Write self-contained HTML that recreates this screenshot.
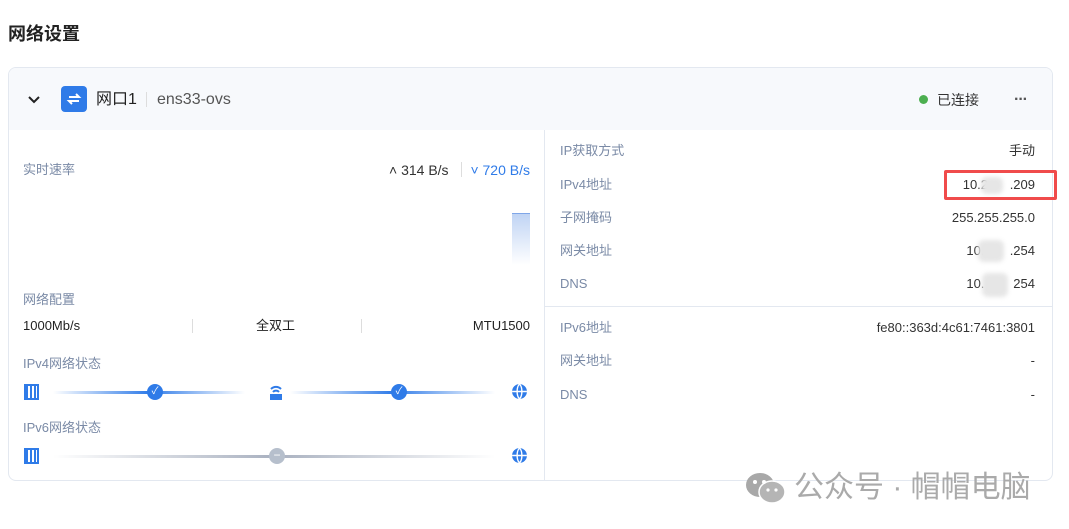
<!DOCTYPE html>
<html><head><meta charset="utf-8"><style>
*{margin:0;padding:0;box-sizing:border-box}
body{width:1069px;height:529px;background:#fff;font-family:"Liberation Sans","Noto Sans CJK SC",sans-serif;position:relative;overflow:hidden;color:#222}
.a{position:absolute;white-space:nowrap;line-height:18px}
.lab{color:#7a8aa6;font-size:13px}
.val{color:#333;font-size:13px;text-align:right}
.blur{position:absolute;background:#e6e6e6;border-radius:6px;filter:blur(2px)}
</style></head><body>
<div class="a" style="left:8px;top:24px;font-size:18px;line-height:20px;font-weight:bold;color:#222">网络设置</div>
<div class="a" style="left:8px;top:67px;width:1045px;height:414px;border:1px solid #e3e8f0;border-radius:8px;overflow:hidden">
 <div class="a" style="left:0;top:0;width:1045px;height:62px;background:#f7f9fc"></div>
 <div class="a" style="left:535px;top:62px;width:1px;height:352px;background:#e3e8f0"></div>
 <div class="a" style="left:536px;top:238px;width:510px;height:1px;background:#e3e8f0"></div>
</div>
<svg class="a" style="left:27px;top:95px" width="14" height="10" viewBox="0 0 14 10"><path d="M2 2l5 5 5-5" stroke="#222" stroke-width="2" fill="none"/></svg>
<div class="a" style="left:61px;top:86px;width:26px;height:26px;background:#2f7be8;border-radius:4px"></div>
<svg class="a" style="left:64px;top:89px" width="20" height="20" viewBox="0 0 20 20"><path d="M5 8h10l-3-3M15 12H5l3 3" stroke="#fff" stroke-width="2" fill="none"/></svg>
<div class="a" style="left:96px;top:90px;font-size:16px;line-height:20px;color:#222">网口1</div>
<div class="a" style="left:146px;top:92px;width:1px;height:15px;background:#ddd"></div>
<div class="a" style="left:157px;top:90px;font-size:16px;line-height:20px;color:#555">ens33-ovs</div>
<div class="a" style="left:919px;top:95px;width:9px;height:9px;border-radius:50%;background:#4caf50"></div>
<div class="a" style="left:937px;top:91px;font-size:14px;color:#333">已连接</div>
<div class="a" style="left:1014px;top:91px;font-size:16px;color:#555;letter-spacing:-1px;font-weight:bold">···</div>

<div class="a lab" style="left:23px;top:161px">实时速率</div>
<div class="a" style="left:389px;top:161px;font-size:14px;color:#333">˄ 314 B/s</div>
<div class="a" style="left:461px;top:162px;width:1px;height:15px;background:#ddd"></div>
<div class="a" style="right:539px;top:161px;font-size:14px;color:#2f7be8">˅ 720 B/s</div>
<div class="a" style="left:512px;top:213px;width:18px;height:52px;background:linear-gradient(#c0d4f4,#fff);border-top:1px solid #7fa6e8"></div>
<div class="a lab" style="left:23px;top:291px">网络配置</div>
<div class="a" style="left:23px;top:317px;font-size:13px">1000Mb/s</div>
<div class="a" style="left:192px;top:319px;width:1px;height:14px;background:#ddd"></div>
<div class="a" style="left:256px;top:317px;font-size:13px">全双工</div>
<div class="a" style="left:361px;top:319px;width:1px;height:14px;background:#ddd"></div>
<div class="a" style="right:539px;top:317px;font-size:13px">MTU1500</div>
<div class="a lab" style="left:23px;top:355px">IPv4网络状态</div>
<div class="a lab" style="left:23px;top:419px">IPv6网络状态</div>
<div class="a" style="left:24px;top:384px;width:15px;height:16px;border:2px solid #2f7be8;background:repeating-linear-gradient(90deg,#2f7be8 0 2px,#fff 2px 4px)"></div>
<div class="a" style="left:53px;top:391px;width:192px;height:3px;background:linear-gradient(90deg,#fff,#2f7be8 50%,#fff)"></div>
<div class="a" style="left:147px;top:384px;width:16px;height:16px;border-radius:50%;background:#2f7be8;color:#fff;font-size:10px;text-align:center;line-height:16px">✓</div>
<svg class="a" style="left:268px;top:383px" width="16" height="18" viewBox="0 0 16 18"><path d="M3 6a7 7 0 0 1 10 0M5 9a4 4 0 0 1 6 0" stroke="#2f7be8" stroke-width="2" fill="none"/><rect x="2" y="11" width="12" height="6" fill="#2f7be8"/></svg>
<div class="a" style="left:290px;top:391px;width:205px;height:3px;background:linear-gradient(90deg,#fff,#2f7be8 50%,#fff)"></div>
<div class="a" style="left:391px;top:384px;width:16px;height:16px;border-radius:50%;background:#2f7be8;color:#fff;font-size:10px;text-align:center;line-height:16px">✓</div>
<svg class="a" style="left:511px;top:383px" width="17" height="17" viewBox="0 0 16 16"><circle cx="8" cy="8" r="7" fill="#2f7be8"/><path d="M1 8h14M8 1c-3 3-3 11 0 14M8 1c3 3 3 11 0 14" stroke="#fff" stroke-width="1.3" fill="none"/></svg>
<div class="a" style="left:24px;top:448px;width:15px;height:16px;border:2px solid #2f7be8;background:repeating-linear-gradient(90deg,#2f7be8 0 2px,#fff 2px 4px)"></div>
<div class="a" style="left:53px;top:455px;width:442px;height:3px;background:linear-gradient(90deg,#fff,#a9b1c0 50%,#fff)"></div>
<div class="a" style="left:269px;top:448px;width:16px;height:16px;border-radius:50%;background:#b6bfcc;color:#fff;font-size:12px;text-align:center;line-height:15px">−</div>
<svg class="a" style="left:511px;top:447px" width="17" height="17" viewBox="0 0 16 16"><circle cx="8" cy="8" r="7" fill="#2f7be8"/><path d="M1 8h14M8 1c-3 3-3 11 0 14M8 1c3 3 3 11 0 14" stroke="#fff" stroke-width="1.3" fill="none"/></svg>

<div class="a lab" style="left:560px;top:142px">IP获取方式</div>
<div class="a val" style="right:34px;top:142px">手动</div>
<div class="a lab" style="left:560px;top:176px">IPv4地址</div>
<div class="a val" style="right:34px;top:176px">10.2&nbsp;&nbsp;&nbsp;&nbsp;&nbsp;&nbsp;.209</div>
<div class="blur" style="left:981px;top:177px;width:22px;height:17px"></div>
<div class="a" style="left:944px;top:170px;width:113px;height:30px;border:3px solid #f04b4b;border-radius:2px"></div>
<div class="a lab" style="left:560px;top:209px">子网掩码</div>
<div class="a val" style="right:34px;top:209px">255.255.255.0</div>
<div class="a lab" style="left:560px;top:242px">网关地址</div>
<div class="a val" style="right:34px;top:242px">10.&nbsp;&nbsp;&nbsp;&nbsp;&nbsp;&nbsp;&nbsp;.254</div>
<div class="blur" style="left:978px;top:240px;width:26px;height:22px"></div>
<div class="a lab" style="left:560px;top:275px">DNS</div>
<div class="a val" style="right:34px;top:275px">10.&nbsp;&nbsp;&nbsp;&nbsp;&nbsp;&nbsp;&nbsp;&nbsp;254</div>
<div class="blur" style="left:982px;top:273px;width:26px;height:24px"></div>
<div class="a lab" style="left:560px;top:319px">IPv6地址</div>
<div class="a val" style="right:34px;top:319px">fe80::363d:4c61:7461:3801</div>
<div class="a lab" style="left:560px;top:352px">网关地址</div>
<div class="a val" style="right:34px;top:352px">-</div>
<div class="a lab" style="left:560px;top:386px">DNS</div>
<div class="a val" style="right:34px;top:386px">-</div>

<svg class="a" style="left:745px;top:471px" width="42" height="34" viewBox="0 0 42 34"><ellipse cx="15" cy="14" rx="14" ry="12" fill="#a8a8a8"/><ellipse cx="27" cy="21" rx="13" ry="11" fill="#b5b5b5" stroke="#fff" stroke-width="1.5"/><circle cx="10" cy="11" r="2" fill="#fff"/><circle cx="19" cy="11" r="2" fill="#fff"/><circle cx="23" cy="19" r="1.6" fill="#fff"/><circle cx="31" cy="19" r="1.6" fill="#fff"/></svg>
<div class="a" style="left:794px;top:471px;font-size:30px;line-height:34px;color:#aaa">公众号 · 帽帽电脑</div>
</body></html>
